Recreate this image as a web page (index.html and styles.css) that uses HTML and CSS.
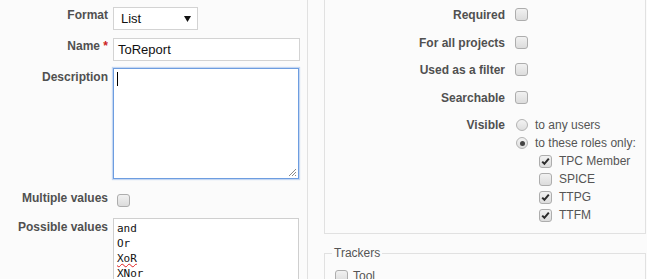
FILE: index.html
```html
<!DOCTYPE html>
<html lang="en">
<head>
<meta charset="utf-8">
<title>Custom field</title>
<link rel="stylesheet" href="styles.css">
</head>
<body>
<div class="page">
  <div class="left">
    <div class="row r-format">
      <label class="lbl">Format</label>
      <div class="select field"><span>List</span><svg class="arrow" width="7" height="6" viewBox="0 0 7 6"><path d="M0 0H7L3.5 6Z" fill="#111"/></svg></div>
    </div>
    <div class="row r-name">
      <label class="lbl">Name <span class="req">*</span></label>
      <div class="input field">ToReport</div>
    </div>
    <div class="row r-desc">
      <label class="lbl">Description</label>
      <div class="textarea focus field">
        <span class="caret"></span>
        <svg class="grip" width="9" height="9" viewBox="0 0 9 9"><path d="M1 8L8 1M4 8L8 4M7 8L8 7" stroke="#8a8a8a" stroke-width="1"/></svg>
      </div>
    </div>
    <div class="row r-multi">
      <label class="lbl">Multiple values</label>
      <span class="cb cb-multi"></span>
    </div>
    <div class="row r-values">
      <label class="lbl">Possible values</label>
      <div class="textarea values field">
        <div>and</div>
        <div>Or</div>
        <div><span class="spell">XoR</span></div>
        <div>XNor</div>
        <div>Nand</div>
      </div>
    </div>
  </div>

  <div class="right">
    <div class="rbox">
      <div class="rrow"><label class="rlbl">Required</label><span class="cb"></span></div>
      <div class="rrow"><label class="rlbl">For all projects</label><span class="cb"></span></div>
      <div class="rrow"><label class="rlbl">Used as a filter</label><span class="cb"></span></div>
      <div class="rrow"><label class="rlbl">Searchable</label><span class="cb"></span></div>
      <div class="rrow vis">
        <label class="rlbl">Visible</label>
        <div class="opts">
          <div class="opt"><span class="radio"></span>to any users</div>
          <div class="opt"><span class="radio on"><span class="dot"></span></span>to these roles only:</div>
          <div class="roles">
            <div class="role"><span class="cb on"><svg width="11" height="11" viewBox="0 0 11 11"><path d="M2.2 5.6L4.4 7.8L8.8 2.6" fill="none" stroke="#2b2b2b" stroke-width="2"/></svg></span>TPC Member</div>
            <div class="role"><span class="cb"></span>SPICE</div>
            <div class="role"><span class="cb on"><svg width="11" height="11" viewBox="0 0 11 11"><path d="M2.2 5.6L4.4 7.8L8.8 2.6" fill="none" stroke="#2b2b2b" stroke-width="2"/></svg></span>TTPG</div>
            <div class="role"><span class="cb on"><svg width="11" height="11" viewBox="0 0 11 11"><path d="M2.2 5.6L4.4 7.8L8.8 2.6" fill="none" stroke="#2b2b2b" stroke-width="2"/></svg></span>TTFM</div>
          </div>
        </div>
      </div>
    </div>
    <fieldset class="trackers">
      <legend>Trackers</legend>
      <div class="tr-item"><span class="cb"></span>Tool</div>
    </fieldset>
  </div>
</div>
</body>
</html>
```

FILE: styles.css
```css
* { box-sizing: border-box; }
html, body { margin: 0; padding: 0; }
body {
  background: #fbfbfb;
  font-family: "Liberation Sans", Arial, sans-serif;
  font-size: 12px;
  color: #505050;
}
.page {
  display: flex;
  gap: 16px;
  align-items: flex-start;
  width: 647px;
  height: 279px;
  overflow: hidden;
}

/* left column */
.left {
  width: 308px;
  height: 279px;
  flex: none;
  border-right: 1px solid #e1e1e1;
  padding-top: 7px;
}
.row { display: flex; align-items: flex-start; }
.lbl {
  width: 108px;
  flex: none;
  text-align: right;
  font-weight: bold;
  line-height: 14px;
  padding-top: 1px;
  white-space: nowrap;
}
.req { color: #c22; }
.field { margin-left: 5px; flex: none; }

.select {
  width: 85px;
  height: 23px;
  border: 1px solid #d3d3d3;
  background: #fff;
  display: flex;
  align-items: center;
  justify-content: space-between;
  padding: 0 6px 0 7px;
  font-size: 13px;
  line-height: 15px;
  color: #111;
}
.r-name { margin-top: 8px; }
.input {
  width: 187px;
  height: 23px;
  border: 1px solid #d3d3d3;
  background: #fff;
  padding: 3px 4px 0;
  font-size: 13px;
  line-height: 15px;
  color: #111;
}
.r-desc { margin-top: 7px; }
.r-desc .lbl { padding-top: 2px; }
.textarea {
  width: 186px;
  background: #fff;
  border: 1px solid #cfcfcf;
}
.focus {
  position: relative;
  height: 111px;
  border-color: #6d9de0;
  box-shadow: 0 0 1px 1px rgba(130, 170, 230, 0.45);
  padding: 3px;
}
.caret {
  display: block;
  width: 1px;
  height: 14px;
  background: #000;
}
.grip {
  position: absolute;
  right: 1px;
  bottom: 1px;
}
.r-multi { margin-top: 12px; }
.r-multi .lbl { padding-top: 0; }
.cb-multi { margin-left: 9px; margin-top: 3px; }
.r-values { margin-top: 11px; }
.r-values .lbl { padding-top: 2px; }
.values {
  height: 100px;
  padding: 2px 3px;
  font-family: "DejaVu Sans Mono", "Liberation Mono", monospace;
  font-size: 11px;
  line-height: 15px;
  color: #111;
}
.spell {
  text-decoration: underline wavy #e02020;
  text-decoration-thickness: 1px;
  text-underline-offset: 1px;
}

/* controls */
.cb {
  display: inline-flex;
  align-items: center;
  justify-content: center;
  flex: none;
  width: 13px;
  height: 13px;
  border: 1px solid #adadad;
  border-radius: 3px;
  background: linear-gradient(#f1f1f1, #dcdcdc);
}
.radio {
  display: inline-flex;
  align-items: center;
  justify-content: center;
  flex: none;
  width: 12px;
  height: 12px;
  border: 1px solid #b3b3b3;
  border-radius: 50%;
  background: linear-gradient(#f3f3f3, #dedede);
}
.dot {
  width: 5px;
  height: 5px;
  border-radius: 50%;
  background: #444;
}

/* right column */
.right { width: 322px; flex: none; }
.rbox {
  border: 1px solid #e1e1e1;
  border-top: none;
  padding: 6px 0 9px;
}
.rrow {
  display: flex;
  align-items: flex-start;
  height: 27.5px;
  line-height: 18px;
}
.rrow.vis { height: auto; }
.rlbl {
  width: 180px;
  flex: none;
  text-align: right;
  font-weight: bold;
  white-space: nowrap;
}
.rrow > .cb { margin-left: 10px; margin-top: 2px; }
.opts { margin-left: 10px; color: #555; }
.opt { display: flex; align-items: flex-start; }
.opt .radio { margin: 3px 7px 0 1px; }
.roles { padding-left: 24px; }
.role { display: flex; align-items: flex-start; }
.role .cb { margin: 3px 7px 0 0; }

.trackers {
  margin: 12px 0 0;
  border: 1px solid #e1e1e1;
  padding: 7px 7px 10px;
  min-width: 0;
}
.trackers legend {
  padding: 0 2px;
  line-height: 14px;
  color: #555;
}
.tr-item {
  display: flex;
  align-items: flex-start;
  line-height: 18px;
  color: #555;
}
.tr-item .cb { margin: 3px 5px 0 3px; }
```
